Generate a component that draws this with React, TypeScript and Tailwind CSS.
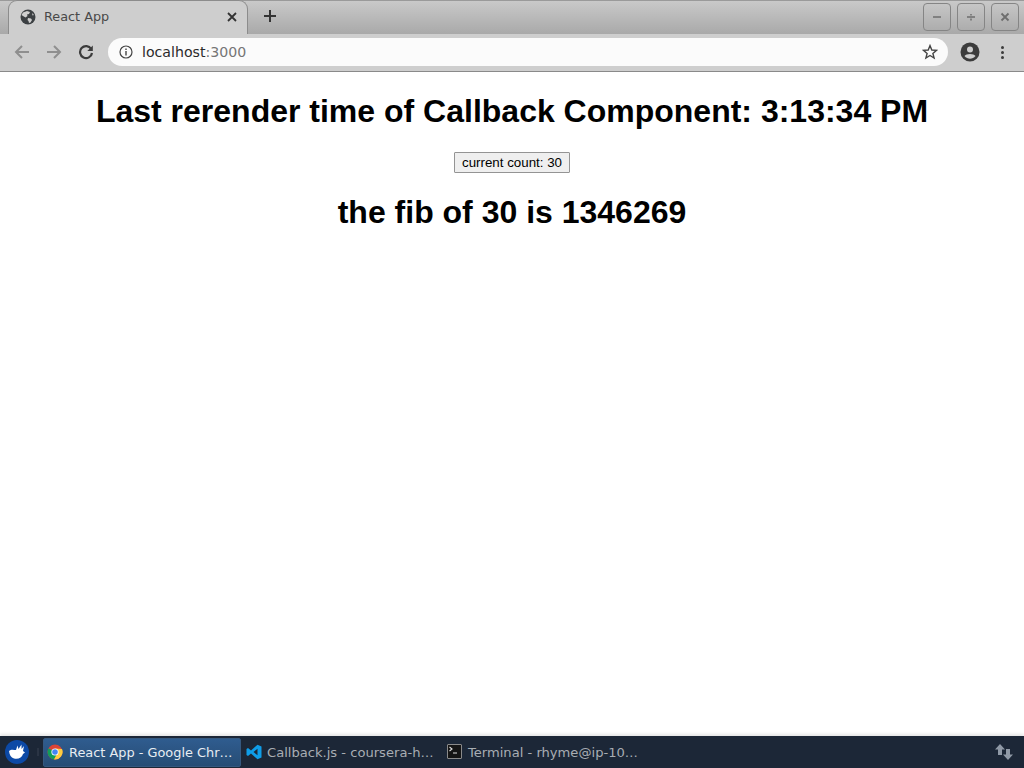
import React from "react";

function Globe() {
  return (
    <svg width="16" height="16" viewBox="0 0 16 16" className="shrink-0">
      <circle cx="8" cy="8" r="7.5" fill="#3c4043" />
      <path d="M3 3.5 L7 2 L10 3 L9 5 L7 5.5 L7.5 7 L5.5 8.5 L3 7 L1.5 6 Z M8 9 L11 9.5 L12 11 L10.5 13.5 L9 14 L8.5 12 L7.5 11 Z M12 4 L14 6 L12.5 6.5 Z" fill="#cfcfcf" />
    </svg>
  );
}

function WinButton({ children }: { children: React.ReactNode }) {
  return (
    <div className="w-[28px] h-[28px] rounded-[4px] border border-[#858585] flex items-center justify-center">
      {children}
    </div>
  );
}

function Chrome() {
  return (
    <svg width="16" height="16" viewBox="0 0 16 16" className="shrink-0">
      <circle cx="8" cy="8" r="7.5" fill="#db4437" />
      <path d="M8 8 L1.6 4.2 A7.5 7.5 0 0 0 7 15.4 L11.4 8 Z" fill="#0f9d58" />
      <path d="M8 4.5 L15 5 A7.5 7.5 0 0 1 7 15.4 L11 8 Z" fill="#ffcd40" />
      <circle cx="8" cy="8" r="3.6" fill="#fff" />
      <circle cx="8" cy="8" r="2.8" fill="#4285f4" />
    </svg>
  );
}

export default function App() {
  return (
    <div className="w-[1024px] h-[768px] flex flex-col overflow-hidden bg-white font-['Liberation_Sans',sans-serif]">
      {/* Title strip */}
      <div className="h-[34px] shrink-0 flex bg-gradient-to-b from-[#c9c9c9] to-[#a9a9a9] border-t border-[#9a9a9a] font-['DejaVu_Sans',sans-serif]">
        <div className="ml-[8px] w-[240px] h-[34px] -mb-px -mt-px bg-[#cecece] rounded-t-[9px] border border-b-0 border-[#8c8c8c] flex items-center pl-[11px] pr-[8px] pb-[2px]">
          <Globe />
          <span className="ml-[8px] text-[12.8px] text-[#494949]">React App</span>
          <svg width="10" height="10" viewBox="0 0 10 10" className="ml-auto mr-[2px]">
            <path d="M1 1 L9 9 M9 1 L1 9" stroke="#333" strokeWidth="1.8" />
          </svg>
        </div>
        <div className="ml-[15px] flex items-center pb-[3px]">
          <svg width="14" height="14" viewBox="0 0 14 14">
            <path d="M7 1 V13 M1 7 H13" stroke="#333" strokeWidth="2" />
          </svg>
        </div>
        <div className="ml-auto mr-[5px] flex items-center gap-[6px] h-[30px] mt-px">
          <WinButton>
            <svg width="10" height="10" viewBox="0 0 10 10"><path d="M1 5 H9" stroke="#6e6e6e" strokeWidth="1.5" /></svg>
          </WinButton>
          <WinButton>
            <svg width="10" height="10" viewBox="0 0 10 10"><path d="M1 5 H9 M5 2 V3.5 M5 6.5 V8.5" stroke="#6e6e6e" strokeWidth="1.5" /></svg>
          </WinButton>
          <WinButton>
            <svg width="10" height="10" viewBox="0 0 10 10"><path d="M1.5 1.5 L8.5 8.5 M8.5 1.5 L1.5 8.5" stroke="#6e6e6e" strokeWidth="1.8" /></svg>
          </WinButton>
        </div>
      </div>

      {/* Toolbar */}
      <div className="h-[38px] shrink-0 bg-[#cecece] border-b border-[#8a8a8a] flex items-center pb-px font-['DejaVu_Sans',sans-serif]">
        <svg width="16" height="16" viewBox="0 0 16 16" className="ml-[14px]">
          <path d="M15 8 H2 M8 2 L2 8 L8 14" fill="none" stroke="#8f8f8f" strokeWidth="2" />
        </svg>
        <svg width="16" height="16" viewBox="0 0 16 16" className="ml-[16px]">
          <path d="M1 8 H14 M8 2 L14 8 L8 14" fill="none" stroke="#8f8f8f" strokeWidth="2" />
        </svg>
        <svg width="16" height="16" viewBox="0 0 16 16" className="ml-[16px]">
          <path d="M13.2 5 A6 6 0 1 0 14 9" fill="none" stroke="#3c3c3c" strokeWidth="2.2" />
          <path d="M14.8 1.5 V7 H9.3 Z" fill="#3c3c3c" />
        </svg>
        <div className="ml-[14px] w-[840px] h-[28px] bg-[#fbfbfb] rounded-full flex items-center pl-[11px] pr-[10px]">
          <svg width="14" height="14" viewBox="0 0 14 14">
            <circle cx="7" cy="7" r="6" fill="none" stroke="#444" strokeWidth="1.2" />
            <path d="M7 6 V10.5 M7 3.5 V5" stroke="#444" strokeWidth="1.4" />
          </svg>
          <span className="ml-[9px] mt-px text-[14.15px] text-[#2a2a2a]">
            localhost<span className="text-[#757575]">:3000</span>
          </span>
          <svg width="16" height="16" viewBox="0 0 16 16" className="ml-auto">
            <path d="M8 1.6 L9.8 6 L14.6 6.3 L10.9 9.4 L12.1 14 L8 11.5 L3.9 14 L5.1 9.4 L1.4 6.3 L6.2 6 Z" fill="none" stroke="#444" strokeWidth="1.4" />
          </svg>
        </div>
        <svg width="20" height="20" viewBox="0 0 20 20" className="ml-[12px]">
          <circle cx="10" cy="10" r="9.5" fill="#3c3c3c" />
          <circle cx="10" cy="7.5" r="3" fill="#cecece" />
          <path d="M4.5 14 C6 11.2 14 11.2 15.5 14 C14 16 12 16.7 10 16.7 C8 16.7 6 16 4.5 14 Z" fill="#cecece" />
        </svg>
        <div className="ml-[21px] flex flex-col gap-[2px]">
          <div className="w-[3px] h-[3px] rounded-full bg-[#3c3c3c]" />
          <div className="w-[3px] h-[3px] rounded-full bg-[#3c3c3c]" />
          <div className="w-[3px] h-[3px] rounded-full bg-[#3c3c3c]" />
        </div>
      </div>

      {/* Page */}
      <div className="flex-1 min-h-0 text-center text-black">
        <h1 className="text-[32px] font-bold leading-[37px] mt-[21px]">
          Last rerender time of Callback Component: 3:13:34 PM
        </h1>
        <button className="mt-[22px] block mx-auto w-[116px] h-[21px] text-[13.33px] leading-none bg-[#efefef] border border-[#949494] rounded-[1px]">
          current count: 30
        </button>
        <h1 className="text-[32px] font-bold leading-[37px] mt-[21px]">the fib of 30 is 1346269</h1>
      </div>

      {/* Taskbar */}
      <div className="h-[32px] shrink-0 bg-[#1c2737] flex items-center text-[13.1px] font-['DejaVu_Sans',sans-serif] shadow-[0_-2px_3px_rgba(0,0,0,0.1)]">
        <div className="ml-[5px] w-[24px] h-[24px] rounded-full bg-[#0c49a6] flex items-center justify-center shrink-0">
          <svg width="20" height="18" viewBox="0 0 20 18">
            <path d="M2 8 C4 6 7 7 9 7 L10.5 2.5 L11.5 6 L14.5 1.5 L14.5 6 L17 3 L16 8 L18 9.5 L16 11 C15 15 11 16.5 7 15.5 C4 14.5 2.5 12 2 8 Z" fill="#fff" />
          </svg>
        </div>
        <div className="ml-[8px] w-[2px] h-[8px] border-x border-[#2a3444] shrink-0" />
        <div className="ml-[4px] w-[198px] h-[29px] rounded-[2px] border border-[#35587f] bg-gradient-to-b from-[#2f5c8f] to-[#274d75] flex items-center pl-[3px] text-[#e8edf2] shrink-0">
          <Chrome />
          <span className="ml-[6px] mt-[2px] text-[12.9px] whitespace-nowrap">React App - Google Chr…</span>
        </div>
        <div className="ml-[5px] w-[201px] h-[29px] flex items-center text-[#a8adb3] shrink-0">
          <svg width="16" height="16" viewBox="0 0 16 16" className="shrink-0">
            <path d="M11.5 0.8 L15.5 2.6 V13.4 L11.5 15.2 L5 9.5 L2 12 L0.5 11 V5 L2 4 L5 6.5 Z M11.5 4.8 L7.5 8 L11.5 11.2 Z" fill="#0f9de8" fillRule="evenodd" />
          </svg>
          <span className="ml-[5px] mt-px whitespace-nowrap">Callback.js - coursera-h…</span>
        </div>
        <div className="flex items-center text-[#a8adb3]">
          <div className="w-[15px] h-[15px] bg-[#151515] border border-[#8a8a8a] rounded-[1px] flex items-start justify-start shrink-0">
            <svg width="13" height="13" viewBox="0 0 13 13">
              <path d="M1.5 2 L4 4 L1.5 6 M5 8 H9" fill="none" stroke="#ddd" strokeWidth="1.1" />
            </svg>
          </div>
          <span className="ml-[6px] mt-px whitespace-nowrap">Terminal - rhyme@ip-10…</span>
        </div>
        <svg width="20" height="18" viewBox="0 0 20 18" className="ml-auto mr-[10px]">
          <path d="M6 1 L11 6.5 H8 V12 H4 V6.5 H1 Z" fill="#8f99a6" />
          <path d="M14 17 L19 11.5 H16 V6 H12 V11.5 H9 Z" fill="#8f99a6" />
        </svg>
      </div>
    </div>
  );
}
